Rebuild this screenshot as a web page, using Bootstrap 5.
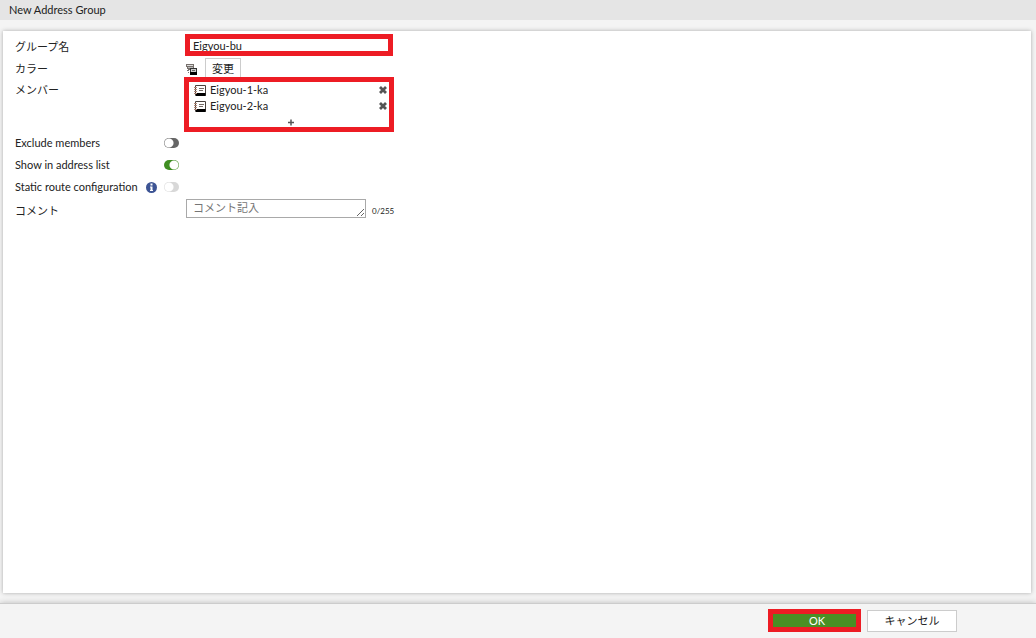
<!DOCTYPE html>
<html lang="ja">
<head>
<meta charset="utf-8">
<meta name="viewport" content="width=device-width, initial-scale=1">
<title>New Address Group</title>
<link href="https://cdn.jsdelivr.net/npm/bootstrap@5.3.0/dist/css/bootstrap.min.css" rel="stylesheet">
<style>
  body { font: 11px/20px Lato, "Noto Sans CJK JP", sans-serif; color: #222; background: #f4f4f4; }
  .title-bar { background: #e5e5e5; padding: 0 9px; }
  .title-bar h1 { font-size: 11px; line-height: 20px; }
  .page-body { padding: 11px 5px 10px 3px; }
  .panel { background: #fff; padding: 3px 12px; box-shadow: 0 0 4px #aaa; }
  .form-line { display: flex; height: 22px; }
  .caption { width: 170px; flex: none; line-height: 18px; padding-top: 4px; }
  .color-line { height: 21px; }
  .member-line { height: auto; min-height: 55px; }
  .marked { border: 5px solid #ed1c24; border-radius: 0; background: #fff; }
  .name-input { width: 208px; height: 22px; padding: 0 3px; line-height: 12px; color: #222; }
  .members { width: 210px; min-height: 55px; padding: 0 1px 0 5px; margin-left: -1px; line-height: 16px; }
  .plain-btn { border: 1px solid #ccc; border-radius: 0; background: #fff; color: #222; padding: 0; }
  .change-btn { width: 36px; height: 20px; line-height: 20px; margin-top: 2px; margin-left: 7px; }
  .bare { border: 0; background: none; padding: 0; display: flex; align-items: center; justify-content: center; }
  .switch { appearance: none; width: 15px; height: 10px; margin: 0; border-radius: 5px; background: #666 radial-gradient(circle at 5px 5px, #fff 4px, transparent 5px); }
  .switch:checked { background: #3f8e22 radial-gradient(circle at 10px 5px, #fff 4px, transparent 5px); }
  .switch:disabled { background-color: #d8d8d8; }
  .switch-line { width: 164px; align-items: center; white-space: nowrap; }
  .info-icon { margin-right: 7px; }
  .comment { width: 180px; height: 19px; border: 1px solid #a9a9a9; border-radius: 0; padding: 0 6px; line-height: 16px; resize: both; overflow: hidden; margin: 1px 0 0 1px; }
  .comment::placeholder { color: #757575; }
  .counter { font-size: 8px; padding: 3px 0 0 6px; }
  .footer-bar { border-top: 1px solid #ccc; background: #f4f4f4; padding: 5px 79px 6px 0; gap: 6px; box-shadow: 0 0 6px #bbb; z-index: 1; }
  .ok-btn { width: 93px; height: 23px; background: #4a8f24; color: #fff; line-height: 12px; padding: 0 0 0 5px; }
  .cancel-btn { width: 90px; height: 22px; line-height: 20px; margin-top: 1px; }
</style>
</head>
<body class="d-flex flex-column vh-100">
<svg class="d-none" aria-hidden="true">
  <symbol id="address" viewBox="0 0 12 11">
    <path d="M1.500.5h10v10h-10z" fill="#fff" stroke="#49423e"/>
    <path d="M2 8h9.500v3H2z" fill="#000"/>
    <path d="M5 3h5v1H5zM5 5h4v1H5z" fill="#756b66"/>
    <path d="M0 2h3v1H0zM0 4h3v1H0zM0 6h3v1H0zM0 8h3v1H0z" fill="#b08878"/>
  </symbol>
  <symbol id="cross" viewBox="0 0 10 10"><path d="M2 2l6 6M8 2l-6 6" stroke="#555" stroke-width="2.800"/></symbol>
</svg>
<header class="title-bar"><h1 class="m-0 fw-normal">New Address Group</h1></header>
<main class="page-body d-flex flex-column flex-grow-1">
  <form class="panel flex-grow-1" id="group-form">
    <div class="form-line">
      <label class="caption" for="group-name">グループ名</label>
      <input class="marked name-input" id="group-name" type="text" value="Eigyou-bu">
    </div>
    <div class="form-line color-line">
      <span class="caption">カラー</span>
      <svg class="mt-2" width="13" height="11" viewBox="0 0 13 11" aria-hidden="true">
        <path d="M1 0h8v6H3V5H2V3H1z" fill="#77706c"/>
        <path d="M2 1h6v1H2z" fill="#ddd"/><path d="M3 3h5v1H3z" fill="#bbb"/>
        <path d="M2 6h2v1H2zM3 8h1v1H3z" fill="#777"/>
        <path d="M5 4h7v7H5z" fill="#333"/><path d="M6 5h5v3H6z" fill="#ccc"/><path d="M7 6h3v1H7z" fill="#666"/><path d="M5 8h7v3H5z" fill="#000"/>
      </svg>
      <button type="button" class="plain-btn change-btn">変更</button>
    </div>
    <div class="form-line member-line">
      <span class="caption">メンバー</span>
      <div class="marked members">
        <div class="d-flex align-items-center"><svg class="me-1" width="12" height="11" aria-hidden="true"><use href="#address"/></svg><span class="flex-grow-1">Eigyou-1-ka</span><button type="button" class="bare" aria-label="Remove Eigyou-1-ka"><svg width="10" height="10"><use href="#cross"/></svg></button></div>
        <div class="d-flex align-items-center"><svg class="me-1" width="12" height="11" aria-hidden="true"><use href="#address"/></svg><span class="flex-grow-1">Eigyou-2-ka</span><button type="button" class="bare" aria-label="Remove Eigyou-2-ka"><svg width="10" height="10"><use href="#cross"/></svg></button></div>
        <button type="button" class="bare w-100" aria-label="Add member"><svg width="8" height="13" viewBox="0 0 8 13"><path d="M1 8.500h6M4 5.500v6" stroke="#555" stroke-width="1.500"/></svg></button>
      </div>
    </div>
    <div class="form-line switch-line"><label class="flex-grow-1" for="exclude">Exclude members</label><input class="switch" id="exclude" type="checkbox" role="switch"></div>
    <div class="form-line switch-line"><label class="flex-grow-1" for="show">Show in address list</label><input class="switch" id="show" type="checkbox" role="switch" checked></div>
    <div class="form-line switch-line"><label class="flex-grow-1" for="route">Static route configuration</label><svg class="info-icon" width="11" height="11" viewBox="0 0 11 11" aria-hidden="true"><circle cx="5.500" cy="5.500" r="5.500" fill="#3d5494"/><path d="M4.500 1.500h2v2h-2zM4 4.500h2.500V8H7v1H4V8h.5V5.500H4z" fill="#fff"/></svg><input class="switch" id="route" type="checkbox" role="switch" disabled></div>
    <div class="form-line">
      <label class="caption" for="comment">コメント</label>
      <textarea class="comment" id="comment" placeholder="コメント記入" rows="1"></textarea>
      <span class="counter">0/255</span>
    </div>
  </form>
</main>
<footer class="footer-bar d-flex justify-content-end">
  <button type="submit" form="group-form" class="marked ok-btn">OK</button>
  <button type="button" class="plain-btn cancel-btn">キャンセル</button>
</footer>
</body>
</html>
